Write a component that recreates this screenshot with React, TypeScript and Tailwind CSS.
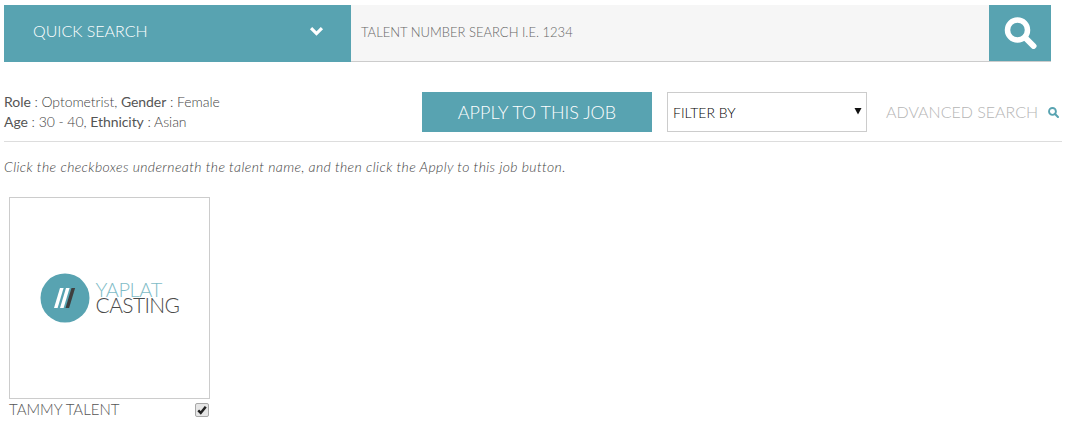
import React from 'react';

function SearchIcon({ className }: { className: string }) {
  return (
    <svg viewBox="0 0 32 32" className={className} fill="none" stroke="currentColor">
      <circle cx="13" cy="13" r="10" strokeWidth="5.5" />
      <path d="M20.5 20.5 L29 29" strokeWidth="6" strokeLinecap="round" />
    </svg>
  );
}

function Logo() {
  return (
    <div className="flex items-center">
      <svg viewBox="0 0 50 50" className="w-[50px] h-[50px] shrink-0">
        <circle cx="25" cy="25" r="24.5" fill="#58a3b1" />
        <path d="M20 15h3.6l-6 20h-3.6z" fill="#ffffff" />
        <path d="M26 15h3.6l-6 20h-3.6z" fill="#ffffff" />
        <path d="M31.5 15h3.6l-6 20h-3.6z" fill="#3f3f3f" />
      </svg>
      <div className="ml-[6px] mb-[2px] font-['Lato',sans-serif] font-light">
        <div className="text-[20px] leading-[15px] text-[#7fbcc7] tracking-[-0.4px]">YAPLAT</div>
        <div className="text-[21px] leading-[15px] text-[#4a4a4a] tracking-[-0.6px]">CASTING</div>
      </div>
    </div>
  );
}

export default function App() {
  return (
    <div className="h-[428px] w-[1067px] overflow-hidden bg-white pl-[4px] pt-[5px] font-['Lato',sans-serif] text-[#555555]">
      <div className="flex h-[57px] w-[1047px]">
        <div className="flex w-[347px] items-center justify-between bg-[#58a3b1] pl-[29px] pr-[27px] pb-[6px]">
          <span className="text-[16px] font-light text-white">QUICK SEARCH</span>
          <svg viewBox="0 0 16 12" className="h-[10px] w-[15px]" fill="none" stroke="#ffffff" strokeWidth="3.8">
            <path d="M1.5 2.5 L8 9 L14.5 2.5" />
          </svg>
        </div>
        <div className="flex flex-1 items-center border-b border-[#cccccc] bg-[#f6f6f6] pl-[10px]">
          <span className="text-[13px] font-light text-[#666666]">TALENT NUMBER SEARCH I.E. 1234</span>
        </div>
        <div className="flex w-[62px] items-center justify-center border-b border-[#cccccc] bg-[#58a3b1]">
          <SearchIcon className="h-[32px] w-[33px] text-white" />
        </div>
      </div>

      <div className="mt-[30px] flex h-[50px] w-[1058px] items-start border-b border-[#dddddd]">
        <div className="w-[418px] text-[14px] leading-[20px] font-light tracking-[-0.06px] text-[#444444]">
          <div>
            <span className="font-normal text-[#555555]">Role</span> : Optometrist, <span className="font-normal text-[#555555]">Gender</span> : Female
          </div>
          <div>
            <span className="font-normal text-[#555555]">Age</span> : 30 - 40, <span className="font-normal text-[#555555]">Ethnicity</span> : Asian
          </div>
        </div>
        <button className="h-[40px] w-[230px] bg-[#58a3b1] text-[18px] font-light text-white">APPLY TO THIS JOB</button>
        <div className="ml-[15px] flex h-[40px] w-[200px] items-center justify-between border border-[#cccccc] bg-white pl-[5px] pr-[4px]">
          <span className="text-[14px] font-light text-black">FILTER BY</span>
          <svg viewBox="0 0 8 8" className="mb-[2px] h-[8px] w-[8px]" fill="#111111">
            <path d="M0.5 1 H7.5 L4 7.5 Z" />
          </svg>
        </div>
        <div className="ml-[19px] flex h-[40px] items-center">
          <span className="text-[16px] font-light text-[#b5b5b5]">ADVANCED SEARCH</span>
          <SearchIcon className="ml-[10px] h-[11px] w-[11px] text-[#58a3b1]" />
        </div>
      </div>

      <p className="mt-[16px] text-[14px] leading-[18px] font-light italic tracking-[0.37px] text-[#444444]">
        Click the checkboxes underneath the talent name, and then click the Apply to this job button.
      </p>

      <div className="mt-[21px] ml-[5px] w-[201px]">
        <div className="flex h-[202px] items-center justify-center border border-[#cccccc] bg-white">
          <Logo />
        </div>
        <div className="flex items-start justify-between pr-[1px]">
          <span className="text-[15px] leading-[20px] font-light text-[#555555]">TAMMY TALENT</span>
          <span className="mt-[4px] flex h-[14px] w-[14px] items-center justify-center rounded-[2px] border border-[#a8a8a8] bg-[#e6e6e6]">
            <svg viewBox="0 0 12 12" className="h-[10px] w-[10px]" fill="none" stroke="#222222" strokeWidth="3">
              <path d="M1.5 6.5 L4.5 9.5 L10.5 2" />
            </svg>
          </span>
        </div>
      </div>
    </div>
  );
}
